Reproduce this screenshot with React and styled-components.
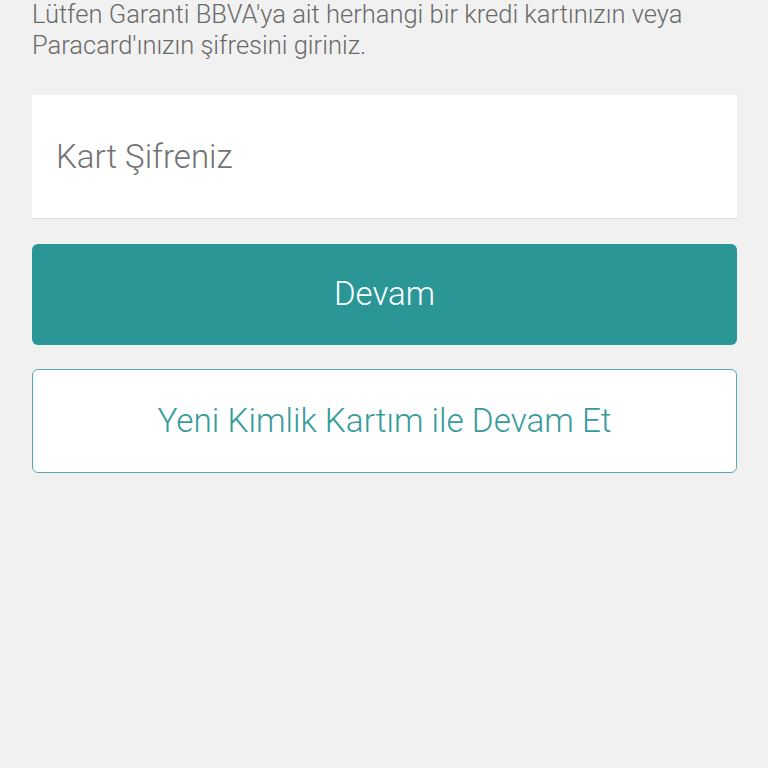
import React from 'react'
import styled, { createGlobalStyle } from 'styled-components'

const Global = createGlobalStyle`
  html, body {
    margin: 0;
    padding: 0;
    background: #f1f1f1;
  }
  body {
    font-family: Roboto, "Noto Sans", sans-serif;
  }
`

function App() {
  return (
    <>
      <Global />
      <Page>
        <Info>
          Lütfen Garanti BBVA'ya ait herhangi bir kredi kartınızın veya Paracard'ınızın şifresini giriniz.
        </Info>
        <Field>
          <input type="password" placeholder="Kart Şifreniz" />
        </Field>
        <PrimaryButton>Devam</PrimaryButton>
        <OutlineButton>Yeni Kimlik Kartım ile Devam Et</OutlineButton>
      </Page>
    </>
  )
}

export default App

const Page = styled.div`
  min-height: 768px;
  padding: 0 31px 0 32px;
  display: flex;
  flex-direction: column;
`
const Info = styled.p`
  margin: -1px 0 34px;
  width: 690px;
  font-size: 25.5px;
  font-weight: 300;
  line-height: 31px;
  color: #6a6a6a;
`
const Field = styled.div`
  height: 123px;
  background: #fff;
  border-bottom: 1px solid #dcdcdc;
  display: flex;
  align-items: center;
  margin-bottom: 25px;
  input {
    border: none;
    outline: none;
    background: transparent;
    width: 100%;
    padding: 0 24px;
    font-family: Roboto, sans-serif;
    font-size: 33px;
    font-weight: 300;
    color: #555;
  }
  input::placeholder {
    color: #737373;
  }
`
const PrimaryButton = styled.button`
  height: 101px;
  border: none;
  border-radius: 6px;
  background: #2a9696;
  color: #fff;
  font-family: Roboto, sans-serif;
  font-size: 33px;
  font-weight: 300;
  padding-bottom: 3px;
  margin-bottom: 24px;
  cursor: pointer;
`
const OutlineButton = styled.button`
  height: 104px;
  border: 1.5px solid #55abab;
  border-radius: 6px;
  background: #fff;
  color: #379c9c;
  font-family: Roboto, sans-serif;
  font-size: 33.3px;
  font-weight: 300;
  padding-bottom: 2px;
  cursor: pointer;
`
